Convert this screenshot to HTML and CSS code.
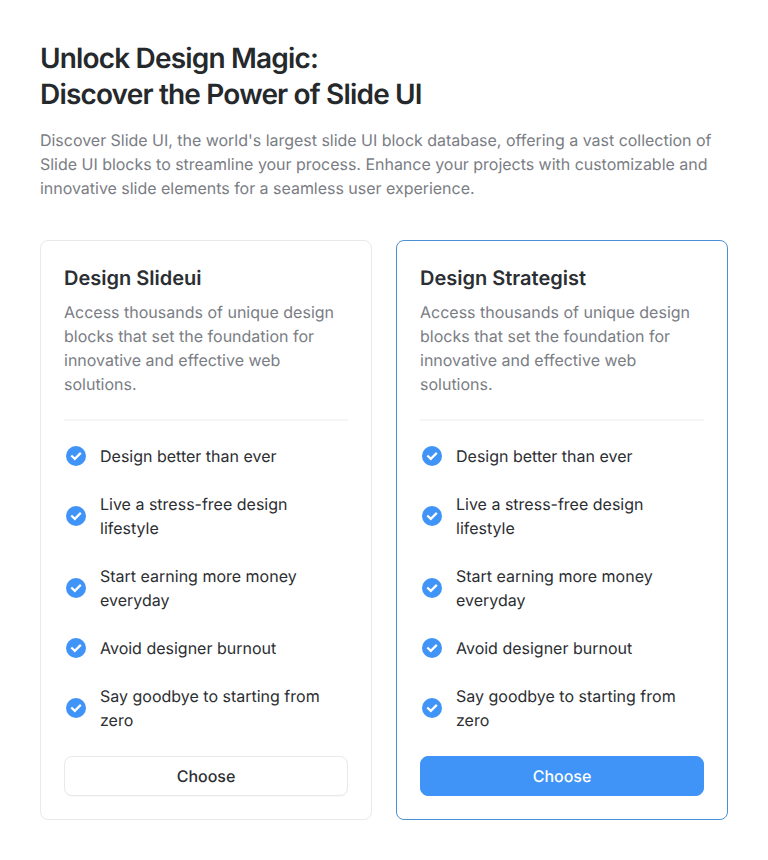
FILE: index.html
```html
<!DOCTYPE html>
<html lang="en">
<head>
<meta charset="utf-8">
<title>Slide UI</title>
<link rel="stylesheet" href="styles.css">
</head>
<body>
<svg class="defs" width="0" height="0" aria-hidden="true">
<symbol id="check" viewBox="0 0 24 24"><circle cx="12" cy="12" r="10" fill="#4094f7"/><path d="M7.3 11.5l3.5 3.4 6-6" fill="none" stroke="#fff" stroke-width="2.2"/></symbol>
</svg>
<main class="page">
<header class="intro">
<h1>Unlock Design Magic:<br>Discover the Power of Slide UI</h1>
<p>Discover Slide UI, the world's largest slide UI block database, offering a vast collection of Slide UI blocks to streamline your process. Enhance your projects with customizable and innovative slide elements for a seamless user experience.</p>
</header>
<section class="plans">
<article class="card">
<h2>Design Slideui</h2>
<p>Access thousands of unique design blocks that set the foundation for innovative and effective web solutions.</p>
<ul>
<li><svg><use href="#check"/></svg><span>Design better than ever</span></li>
<li><svg><use href="#check"/></svg><span>Live a stress-free design lifestyle</span></li>
<li><svg><use href="#check"/></svg><span>Start earning more money everyday</span></li>
<li><svg><use href="#check"/></svg><span>Avoid designer burnout</span></li>
<li><svg><use href="#check"/></svg><span>Say goodbye to starting from zero</span></li>
</ul>
<button type="button">Choose</button>
</article>
<article class="card featured">
<h2>Design Strategist</h2>
<p>Access thousands of unique design blocks that set the foundation for innovative and effective web solutions.</p>
<ul>
<li><svg><use href="#check"/></svg><span>Design better than ever</span></li>
<li><svg><use href="#check"/></svg><span>Live a stress-free design lifestyle</span></li>
<li><svg><use href="#check"/></svg><span>Start earning more money everyday</span></li>
<li><svg><use href="#check"/></svg><span>Avoid designer burnout</span></li>
<li><svg><use href="#check"/></svg><span>Say goodbye to starting from zero</span></li>
</ul>
<button type="button">Choose</button>
</article>
</section>
</main>
</body>
</html>
```
FILE: styles.css
```css
* { box-sizing: border-box; margin: 0; padding: 0; }
body { background: #fff; color: #2b2e32; font: 400 16px/24px Inter, sans-serif; text-rendering: geometricPrecision; }
.defs { display: none; }
.page { padding: 40px; }
.intro { margin-bottom: 40px; }
.intro p { letter-spacing: -0.024px; }
h1 { font-size: 28px; line-height: 36px; font-weight: 600; letter-spacing: -0.83px; margin-bottom: 16px; color: #25292c; }
p { color: #7a7d84; }
.plans { display: grid; grid-template-columns: 1fr 1fr; gap: 24px; }
.card { border: 1px solid #e8e9eb; border-radius: 8px; padding: 23px; height: 580px; display: flex; flex-direction: column; }
.featured { border-color: #4a90d6; }
h2 { font-size: 20px; line-height: 28px; font-weight: 600; margin-bottom: 8px; }
ul { list-style: none; border-top: 2px solid #f5f5f6; margin-top: 23px; padding-top: 23px; display: flex; flex-direction: column; gap: 24px; }
li { display: flex; align-items: center; gap: 12px; }
li svg { width: 24px; height: 24px; flex: none; }
button { margin-top: auto; height: 40px; border: 1px solid #e8e9eb; border-radius: 8px; background: #fff; color: #2b2e32; font: 500 16px/24px Inter, sans-serif; text-rendering: inherit; box-shadow: 0 1px 1px rgba(0,0,0,.03); }
.featured button { background: #4094f7; border-color: #4094f7; color: #fff; box-shadow: none; }
```
